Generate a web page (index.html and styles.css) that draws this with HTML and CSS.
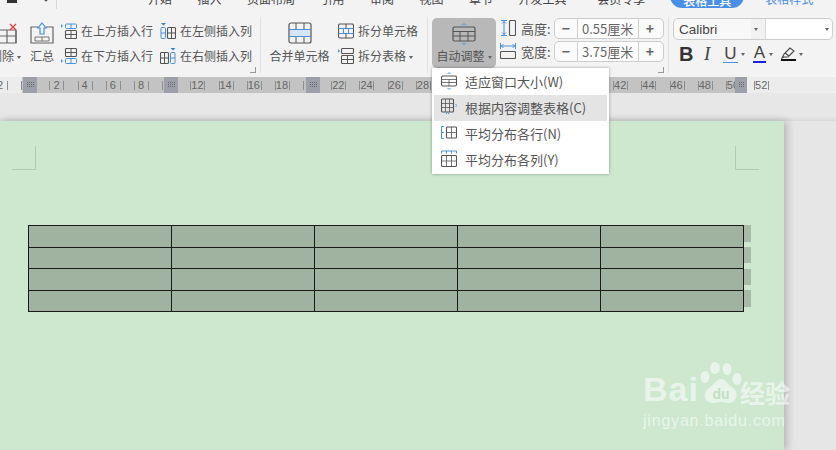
FILE: index.html
```html
<!DOCTYPE html>
<html lang="zh-CN">
<head>
    <meta charset="UTF-8">
    <title>表格工具</title>
    <link rel="stylesheet" href="styles.css">
</head>
<body>
    <div class="tabbar">
        <span class="quick-icon"></span>
        <svg class="quick-chevron" width="8" height="5" viewBox="0 0 8 5"><path d="M1 0l3 3 3-3" fill="none" stroke="#555" stroke-width="1.2"/></svg>
        <span class="quick-sep"></span>
        <div class="tabs">
            <span>开始</span><span>插入</span><span>页面布局</span>
            <span class="tab-wide">引用</span><span>审阅</span><span>视图</span><span>章节</span><span>开发工具</span>
            <span class="tab-member">会员专享</span>
        </div>
        <span class="tab-pill">表格工具</span>
        <span class="tab-link">表格样式</span>
    </div>

    <div class="ribbon">
        <div class="group group-rows">
            <div class="big-btn btn-delete">
                <svg width="24" height="22" viewBox="0 0 24 22" fill="none">
                    <path d="M-2 8H16V21H-2M7 8V21M-2 14H16" stroke="#666" stroke-width="1.2"/>
                    <path d="M10 2l6 6M16 2l-6 6" stroke="#e0403a" stroke-width="1.3"/>
                    <path d="M16 9v12" stroke="#666" stroke-width="1.2"/>
                </svg>
                <span class="big-label">删除<i class="caret"></i></span>
            </div>
            <div class="big-btn btn-sum">
                <svg width="24" height="22" viewBox="0 0 24 22" fill="none">
                    <path d="M8 5H1V21H23V5H16" stroke="#666" stroke-width="1.2"/>
                    <path d="M5 15H19V19H5zM12 15v4" stroke="#777" stroke-width="1"/>
                    <path d="M12 1l4 5h-2v6h-4V6H8z" stroke="#4a90d9" stroke-width="1.2"/>
                </svg>
                <span class="big-label">汇总</span>
            </div>
            <div class="small-col col-rows">
                <div class="small-row">
                    <svg width="16" height="16" viewBox="0 0 16 16" fill="none">
                        <path d="M0 1l2 2-2 2z" fill="#4a90d9"/>
                        <rect x="4.5" y="1" width="11" height="4.5" rx="1" stroke="#4a90d9"/>
                        <path d="M10 1v4.5" stroke="#4a90d9"/>
                        <rect x="4.5" y="7.5" width="11" height="8" rx="1" stroke="#555" stroke-width="1.1"/>
                        <path d="M10 7.5v8M4.5 11.5h11" stroke="#555"/>
                    </svg>
                    <span>在上方插入行</span>
                </div>
                <div class="small-row">
                    <svg width="16" height="16" viewBox="0 0 16 16" fill="none">
                        <rect x="4.5" y="0.5" width="11" height="8" rx="1" stroke="#555" stroke-width="1.1"/>
                        <path d="M10 .5v8M4.5 4.5h11" stroke="#555"/>
                        <path d="M0 11l2 2-2 2z" fill="#4a90d9"/>
                        <rect x="4.5" y="10.5" width="11" height="5" rx="1" stroke="#4a90d9"/>
                        <path d="M10 10.5v5" stroke="#4a90d9"/>
                    </svg>
                    <span>在下方插入行</span>
                </div>
            </div>
            <div class="small-col col-cols">
                <div class="small-row">
                    <svg width="16" height="16" viewBox="0 0 16 16" fill="none">
                        <path d="M1 0h5L3.500 2.500z" fill="#2f7fd0"/>
                        <rect x="1" y="4.500" width="4.500" height="11" rx="1" stroke="#4a90d9"/>
                        <path d="M1 10h4.500" stroke="#4a90d9"/>
                        <rect x="7.500" y="4.500" width="8" height="11" rx="1" stroke="#555" stroke-width="1.100"/>
                        <path d="M11.500 4.500v11M7.500 10h8" stroke="#555"/>
                    </svg>
                    <span>在左侧插入列</span>
                </div>
                <div class="small-row">
                    <svg width="16" height="16" viewBox="0 0 16 16" fill="none">
                        <rect x="0.500" y="4.500" width="8" height="11" rx="1" stroke="#555" stroke-width="1.100"/>
                        <path d="M4.500 4.500v11M.5 10h8" stroke="#555"/>
                        <path d="M10.500 0h5L13 2.500z" fill="#2f7fd0"/>
                        <rect x="10.500" y="4.500" width="4.500" height="11" rx="1" stroke="#4a90d9"/>
                        <path d="M10.500 10H15" stroke="#4a90d9"/>
                    </svg>
                    <span>在右侧插入列</span>
                </div>
            </div>
            <i class="launcher"></i>
        </div>

        <div class="group group-merge">
            <div class="big-btn btn-merge">
                <svg width="24" height="22" viewBox="0 0 24 22" fill="none">
                    <path d="M1.500 8h21v6h-21z" fill="#d6e6f7"/>
                    <rect x="1" y="1" width="22" height="20" rx="2" stroke="#555" stroke-width="1.200"/>
                    <path d="M8 1v6M16 1v6M8 15v6M16 15v6" stroke="#555"/>
                    <path d="M1 7.500h22M1 14.500h22" stroke="#4a90d9"/>
                </svg>
                <span class="big-label">合并单元格</span>
            </div>
            <div class="small-col col-split">
                <div class="small-row">
                    <svg width="16" height="16" viewBox="0 0 16 16" fill="none">
                        <rect x="0.500" y="1" width="15" height="14" rx="1.500" stroke="#555" stroke-width="1.100"/>
                        <path d="M.5 5.500h15M.5 10.500h15M5.500 5.500v5M10.500 5.500v5" stroke="#4a90d9"/>
                        <path d="M8 1v4.500M8 10.500V15" stroke="#555"/>
                    </svg>
                    <span>拆分单元格</span>
                </div>
                <div class="small-row">
                    <svg width="16" height="16" viewBox="0 0 16 16" fill="none">
                        <path d="M0 1l2 2-2 2z" fill="#4a90d9"/>
                        <rect x="3.500" y="0.500" width="12" height="5" rx="1" stroke="#555" stroke-width="1.100"/>
                        <rect x="3.500" y="7.500" width="12" height="8" rx="1" stroke="#555" stroke-width="1.100"/>
                        <path d="M9.500 7.500v8M3.500 11.500h12" stroke="#555"/>
                    </svg>
                    <span>拆分表格<i class="caret"></i></span>
                </div>
            </div>
        </div>

        <div class="group group-size">
            <div class="big-btn btn-auto">
                <svg width="24" height="22" viewBox="0 0 24 22" fill="none">
                    <rect x="1" y="4" width="22" height="14" rx="1.500" stroke="#555" stroke-width="1.200"/>
                    <path d="M1 8.500h22M1 13h22M8 8.500V18M16 8.500V18" stroke="#555"/>
                    <path d="M10 2.500L12 .5l2 2M10 19.500l2 2 2-2" stroke="#4a90d9"/>
                </svg>
                <span class="big-label">自动调整<i class="caret"></i></span>
            </div>
            <div class="dim-col">
                <div class="dim-row">
                    <svg width="16" height="16" viewBox="0 0 16 16" fill="none">
                        <path d="M1 .5h6M1 15.500h6M4 1v14M2 3.500L4 1.500l2 2M2 12.500l2 2 2-2" stroke="#4a90d9"/>
                        <rect x="9.500" y="0.500" width="6" height="15" rx="1" stroke="#555" stroke-width="1.100"/>
                    </svg>
                    <span class="dim-label">高度:</span>
                    <div class="spinner"><span class="spin-btn">−</span><span class="spin-value">0.55厘米</span><span class="spin-btn">+</span></div>
                </div>
                <div class="dim-row">
                    <svg width="16" height="16" viewBox="0 0 16 16" fill="none">
                        <path d="M.5 0v6M15.500 0v6M1 3h14M3.500 1L1.500 3l2 2M12.500 1l2 2-2 2" stroke="#4a90d9"/>
                        <rect x="0.500" y="8.500" width="15" height="7" rx="1" stroke="#555" stroke-width="1.100"/>
                    </svg>
                    <span class="dim-label">宽度:</span>
                    <div class="spinner"><span class="spin-btn">−</span><span class="spin-value">3.75厘米</span><span class="spin-btn">+</span></div>
                </div>
            </div>
            <i class="launcher"></i>
        </div>

        <div class="group-font">
            <div class="font-box">
                <span class="font-name">Calibri</span><span class="font-drop"><i class="caret"></i></span>
                <span class="font-num"><i class="caret"></i></span>
            </div>
            <div class="font-tools">
                <b class="tool-b">B</b>
                <span class="tool-i">I</span>
                <span class="tool-u">U</span><i class="caret"></i>
                <span class="tool-a">A</span><i class="caret"></i>
                <span class="tool-mark">
                    <svg width="15" height="12" viewBox="0 0 15 12" fill="none"><path d="M1 11l2-4 6-6 4 3-6 6H3zM4 6l4 3" stroke="#444" stroke-width="1.100"/></svg>
                </span><i class="caret"></i>
            </div>
        </div>
    </div>

    <div class="ruler">
        <span class="ruler-first">2</span><span></span><span>2</span><span>4</span><span>6</span><span>8</span><span></span>
        <span>12</span><span>14</span><span>16</span><span>18</span><span></span><span>22</span><span>24</span>
        <span>26</span><span>28</span><span></span><span></span><span></span><span></span><span></span>
        <span></span><span>42</span><span>44</span><span>46</span><span>48</span><span>50</span><span>52</span>
        <i class="margin-mark mark-a"></i>
        <i class="margin-mark mark-b"></i>
        <i class="margin-mark mark-c"></i>
        <i class="margin-mark mark-d"></i>
    </div>

    <div class="workspace">
        <div class="page">
            <i class="crop crop-left"></i>
            <i class="crop crop-right"></i>
            <div class="table-wrap">
                <table class="doc-table">
                    <tr><td></td><td></td><td></td><td></td><td></td></tr>
                    <tr><td></td><td></td><td></td><td></td><td></td></tr>
                    <tr><td></td><td></td><td></td><td></td><td></td></tr>
                    <tr><td></td><td></td><td></td><td></td><td></td></tr>
                </table>
                <div class="row-ends"><i></i><i></i><i></i><i></i></div>
            </div>
        </div>
    </div>

    <div class="auto-menu">
        <div class="menu-item">
            <svg width="16" height="18" viewBox="0 0 16 18" fill="none">
                <rect x="0.500" y="4" width="15" height="10" rx="1.500" stroke="#555" stroke-width="1.100"/>
                <path d="M.5 7.500h15M.5 10.500h15M8 7.500V14" stroke="#555" stroke-width=".8"/>
                <path d="M6.500 2L8 .5 9.500 2M6.500 16L8 17.500 9.500 16" stroke="#4a90d9"/>
            </svg>
            <span>适应窗口大小(W)</span>
        </div>
        <div class="menu-item active">
            <svg width="16" height="18" viewBox="0 0 16 18" fill="none">
                <rect x="0.500" y="1" width="12" height="13" rx="1" stroke="#555" stroke-width="1.100"/>
                <path d="M4.500 1v13M8.500 1v13M.5 5.500h12M.5 9.500h12" stroke="#555" stroke-width=".8"/>
                <path d="M14.500 6l1.500 1.500L14.500 9M5 16l1.500-1.500L8 16" stroke="#4a90d9"/>
            </svg>
            <span>根据内容调整表格(C)</span>
        </div>
        <div class="menu-item">
            <svg width="16" height="18" viewBox="0 0 16 18" fill="none">
                <path d="M3 2.500H.5v12H3M.5 8.500H3" stroke="#4a90d9"/>
                <rect x="5.500" y="3" width="10" height="11" rx="1" stroke="#555" stroke-width="1.100"/>
                <path d="M10.500 3v11M5.500 8.500h10" stroke="#555" stroke-width=".8"/>
            </svg>
            <span>平均分布各行(N)</span>
        </div>
        <div class="menu-item">
            <svg width="16" height="18" viewBox="0 0 16 18" fill="none">
                <path d="M.5 3.500V1h15v2.500M5.500 1v2.500M10.500 1v2.500" stroke="#4a90d9"/>
                <rect x="0.500" y="5.500" width="15" height="11" rx="1" stroke="#555" stroke-width="1.100"/>
                <path d="M5.500 5.500v11M10.500 5.500v11M.5 11h15" stroke="#555" stroke-width=".8"/>
            </svg>
            <span>平均分布各列(Y)</span>
        </div>
    </div>

    <div class="watermark">
        <div class="wm-top">
            <span class="wm-bai">Bai</span>
            <svg class="wm-paw" width="44" height="46" viewBox="0 0 44 46">
                <ellipse cx="6" cy="15" rx="4.500" ry="6" fill="#fff"/>
                <ellipse cx="16" cy="6" rx="5" ry="6" fill="#fff"/>
                <ellipse cx="28" cy="7" rx="4.500" ry="6" fill="#fff"/>
                <ellipse cx="38" cy="17" rx="4.500" ry="6" fill="#fff"/>
                <path d="M22 17c5 0 7 6 12 9 6 4 4 15-4 15-3 0-5-1-8-1s-5 1-8 1c-9 0-11-10-4-15 5-3 7-9 12-9z" fill="#fff"/>
                <text x="22" y="37" text-anchor="middle" font-size="14" font-weight="700" font-family="Liberation Sans, sans-serif" fill="#b9d8bd">du</text>
            </svg>
            <span class="wm-cn">经验</span>
        </div>
        <div class="wm-url">jingyan.baidu.com</div>
    </div>
</body>
</html>
```

FILE: styles.css
```css
html, body {
    margin: 0;
    height: 100%;
}
body {
    width: 836px;
    height: 450px;
    overflow: hidden;
    position: relative;
    display: flex;
    flex-direction: column;
    background: #e6e6e6;
    color: #555;
    font-family: "Noto Sans CJK SC", "Noto Sans", sans-serif;
    font-size: 12px;
}
i {
    font-style: normal;
}
svg {
    display: block;
    flex: none;
}
.caret {
    display: inline-block;
    width: 0;
    height: 0;
    margin-left: 3px;
    vertical-align: middle;
    border: 2.5px solid transparent;
    border-top: 3px solid #666;
    border-bottom: 0;
}

/* tab bar, cut off by the top of the shot */
.tabbar {
    height: 9px;
    display: flex;
    align-items: flex-end;
    background: #f3f3f3;
    overflow: hidden;
    flex: none;
}
.quick-icon {
    width: 10px;
    height: 3px;
    margin: 0 0 6px 7px;
    background: #333;
}
.quick-chevron {
    margin: 0 0 6px 25px;
}
.quick-sep {
    width: 1px;
    height: 9px;
    margin-left: 6px;
    background: #d8d8d8;
}
.tabs {
    display: flex;
    gap: 25.5px;
    margin-left: 91px;
    padding-bottom: 2px;
    line-height: 16px;
    color: #444;
    white-space: nowrap;
}
.tab-member {
    margin-left: 5px;
}
.tab-pill {
    width: 74px;
    height: 20px;
    margin-left: 25px;
    margin-bottom: 1px;
    background: #4a8fe7;
    border-radius: 0 0 12px 12px;
    color: #fff;
    text-align: center;
    line-height: 26px;
    font-weight: 500;
    flex: none;
}
.tab-link {
    margin-left: 21px;
    padding-bottom: 2px;
    line-height: 16px;
    color: #4a8fe7;
    white-space: nowrap;
}

/* ribbon */
.ribbon {
    height: 68px;
    display: flex;
    background: #f3f3f3;
    box-sizing: border-box;
    flex: none;
}
.group {
    position: relative;
    display: flex;
    height: 56px;
    margin-top: 8px;
    border-right: 1px solid #e2e2e2;
    box-sizing: border-box;
}
.group-rows {
    width: 261px;
}
.group-merge {
    width: 167px;
    padding-left: 8px;
}
.group-size {
    width: 241px;
    padding-left: 4px;
}
.launcher {
    position: absolute;
    right: 4px;
    bottom: 0;
    width: 5px;
    height: 5px;
    border-right: 1px solid #999;
    border-bottom: 1px solid #999;
}
.big-btn {
    display: flex;
    flex-direction: column;
    align-items: center;
    height: 50px;
    margin-top: 1px;
    padding-top: 4px;
    box-sizing: border-box;
    white-space: nowrap;
}
.big-label {
    margin-top: 4px;
    line-height: 16px;
}
/* the left half of this button is off screen */
.btn-delete {
    width: 37px;
    margin-left: -12px;
    align-items: flex-end;
}
.btn-delete svg {
    margin-right: 1px;
}
.btn-delete .big-label {
    padding-right: 4px;
}
.btn-sum {
    width: 26px;
    margin-left: 4px;
}
.btn-merge {
    width: 61px;
}
.btn-auto {
    width: 64px;
    background: #b8b8b8;
    border-radius: 5px;
    margin-top: 1px;
    height: 50px;
    padding-top: 5px;
}
.btn-auto .big-label {
    margin-top: 3px;
}
.small-col {
    display: flex;
    flex-direction: column;
    margin-top: 1px;
}
.col-rows {
    width: 99px;
    margin-left: 6px;
}
.col-cols {
    width: 93px;
}
.col-split {
    margin-left: 8px;
}
.small-row {
    display: flex;
    align-items: center;
    gap: 4px;
    height: 25px;
    white-space: nowrap;
}
.dim-col {
    display: flex;
    flex-direction: column;
    gap: 1px;
    margin: 0 0 0 4px;
}
.dim-row {
    display: flex;
    align-items: center;
    height: 22px;
}
.dim-label {
    width: 33px;
    margin-left: 5px;
    font-size: 13px;
    white-space: nowrap;
}
.spinner {
    display: flex;
    width: 110px;
    height: 21px;
    border: 1px solid #cdcdcd;
    border-radius: 5px;
    box-sizing: border-box;
    background: #fbfbfb;
}
.spin-btn {
    width: 22px;
    text-align: center;
    line-height: 18px;
    font-size: 14px;
    font-weight: 700;
    color: #666;
}
.spin-value {
    width: 62px;
    padding-left: 4px;
    box-sizing: border-box;
    border-left: 1px solid #cdcdcd;
    border-right: 1px solid #cdcdcd;
    line-height: 19px;
    font-size: 13px;
    color: #666;
    background: #fff;
}

/* font group */
.group-font {
    margin: 9px 0 0 4px;
}
.font-box {
    display: flex;
    width: 160px;
    height: 22px;
    border: 1px solid #cdcdcd;
    border-radius: 5px;
    box-sizing: border-box;
    background: #f8f8f8;
}
.font-name {
    width: 77px;
    padding-left: 5px;
    box-sizing: border-box;
    font-family: "Liberation Sans", sans-serif;
    font-size: 13.5px;
    line-height: 22px;
    color: #444;
}
.font-drop {
    width: 14px;
    line-height: 18px;
    border-right: 1px solid #d8d8d8;
    background: #f1f1f1;
}
.font-num {
    flex: 1;
    line-height: 18px;
    text-align: right;
    padding-right: 3px;
    background: #fff;
    border-radius: 0 5px 5px 0;
}
.font-tools {
    display: flex;
    align-items: center;
    height: 24px;
    margin-top: 2px;
    padding-left: 6px;
    font-family: "Liberation Sans", sans-serif;
    color: #444;
}
.tool-b {
    font-size: 20px;
    color: #333;
    width: 25px;
}
.tool-i {
    font-family: "Liberation Serif", serif;
    font-style: italic;
    font-size: 19px;
    width: 19px;
}
.tool-u {
    width: 15px;
    font-size: 17px;
    line-height: 17px;
    text-align: center;
    border-bottom: 1px solid #4a8fe7;
}
.tool-a {
    width: 13px;
    margin-left: 8px;
    font-size: 17px;
    line-height: 16px;
    text-align: center;
    border-bottom: 2px solid #1f1fe0;
}
.tool-mark {
    margin-left: 8px;
    border-bottom: 2px solid #111;
}

/* ruler */
.ruler {
    position: relative;
    flex: none;
    display: flex;
    height: 16px;
    overflow: hidden;
    background: linear-gradient(to right, #ececec 22px, #c3c3c3 22px, #c3c3c3 747px, #ececec 747px);
}
.ruler span {
    flex: none;
    width: 28.2px;
    text-align: center;
    font-family: "Liberation Sans", sans-serif;
    font-size: 11px;
    line-height: 16px;
    color: #666;
    background:
        linear-gradient(#8e8e8e, #8e8e8e) 7px 4px / 1px 9px no-repeat,
        linear-gradient(#8e8e8e, #8e8e8e) 21px 4px / 1px 9px no-repeat;
}
.ruler .ruler-first {
    width: 14.2px;
    text-align: left;
    text-indent: -3px;
    background-position: 7px 4px, 100px 4px;
}
.margin-mark {
    position: absolute;
    top: 0;
    height: 16px;
    width: 14px;
    padding: 5px 3px;
    box-sizing: border-box;
    background:
        conic-gradient(#666 25%, transparent 0) 0 0 / 2px 2px content-box,
        #9da0ab;
}
.mark-a { left: 23px; }
.mark-b { left: 164px; }
.mark-c { left: 306px; }
.mark-d { left: 735px; width: 12px; }

/* document area */
.workspace {
    flex: 1;
    padding-top: 28px;
    background: linear-gradient(#e7e7e7 23px, #dadada 28px, #e6e6e6 28px);
    min-height: 0;
}
.page {
    position: relative;
    width: 784px;
    height: 100%;
    padding: 104px 0 0 28px;
    box-sizing: border-box;
    background: #cde8cf;
    box-shadow: 3px 0 8px rgba(0, 0, 0, 0.22);
}
.crop {
    position: absolute;
    top: 25px;
    width: 23px;
    height: 23px;
    border-bottom: 1px solid #b0ccb2;
}
.crop-left {
    left: 12px;
    border-right: 1px solid #b0ccb2;
}
.crop-right {
    left: 735px;
    border-left: 1px solid #b0ccb2;
}
.table-wrap {
    display: flex;
    align-items: flex-start;
}
.doc-table {
    border-collapse: collapse;
    table-layout: fixed;
    width: 716px;
    height: 87px;
    background: #9fb3a0;
}
.doc-table td {
    border: 1px solid #1a1a1a;
    padding: 0;
}
.row-ends {
    display: flex;
    flex-direction: column;
    gap: 5.3px;
}
.row-ends i {
    display: block;
    width: 7px;
    height: 16.500px;
    background: #a6bba8;
}

/* dropdown of the auto-fit button */
.auto-menu {
    position: absolute;
    left: 432px;
    top: 68px;
    width: 177px;
    height: 106px;
    padding: 1px 2px 0;
    box-sizing: border-box;
    background: #fff;
    box-shadow: 0 0 3px rgba(0, 0, 0, 0.35);
}
.menu-item {
    display: flex;
    align-items: center;
    gap: 8px;
    height: 26px;
    padding: 0 0 2px 7px;
    box-sizing: border-box;
    font-size: 13px;
    white-space: nowrap;
}
.menu-item.active {
    background: #e4e4e4;
}

/* watermark */
.watermark {
    position: absolute;
    left: 643px;
    top: 358px;
    width: 150px;
    color: #fff;
    opacity: 0.55;
}
.wm-top {
    display: flex;
    align-items: flex-end;
    height: 50px;
}
.wm-bai {
    font-family: "Liberation Sans", sans-serif;
    font-weight: 700;
    font-size: 34px;
    line-height: 38px;
    letter-spacing: 1px;
}
.wm-cn {
    font-size: 25px;
    line-height: 32px;
    margin-left: -3px;
    font-weight: 700;
    white-space: nowrap;
}
.wm-url {
    margin-top: 4px;
    font-family: "Liberation Sans", sans-serif;
    font-size: 16px;
    line-height: 18px;
    letter-spacing: 0.8px;
    white-space: nowrap;
}
```
